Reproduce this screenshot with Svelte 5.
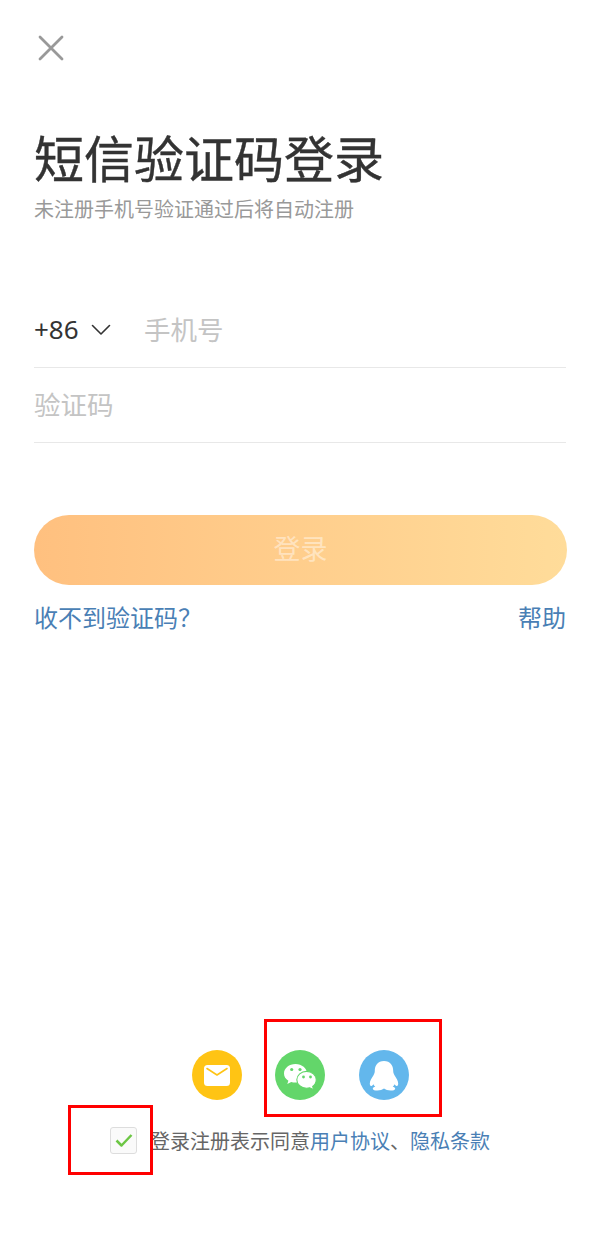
<script>
  const subtitle = '未注册手机号验证通过后将自动注册';
</script>

<div class="page">
  <button class="close" aria-label="关闭">
    <svg width="26" height="26" viewBox="0 0 26 26"><path d="M2 2 L24 24 M24 2 L2 24" stroke="#999" stroke-width="2.8" fill="none" stroke-linecap="round"/></svg>
  </button>

  <h1>短信验证码登录</h1>
  <p class="sub">{subtitle}</p>

  <div class="form">
    <div class="row">
      <span class="code">+86</span>
      <svg class="chev" width="20" height="12" viewBox="0 0 20 12"><path d="M1.5 1.5 L10 10 L18.5 1.5" stroke="#333" stroke-width="1.6" fill="none" stroke-linecap="round" stroke-linejoin="round"/></svg>
      <span class="ph">手机号</span>
    </div>
    <div class="row">
      <span class="ph first">验证码</span>
    </div>
  </div>

  <button class="login">登录</button>

  <div class="links">
    <span>收不到验证码？</span>
    <span>帮助</span>
  </div>

  <div class="spacer"></div>

  <div class="socials">
    <span class="badge mail">
      <svg width="26" height="21" viewBox="0 0 26 21"><rect width="26" height="21" rx="3.5" fill="#fff"/><path d="M3 3.500 L13 10 L23 3.500" stroke="#ffc414" stroke-width="1.6" fill="none" stroke-linecap="round" stroke-linejoin="round"/></svg>
    </span>
    <span class="badge wechat">
      <svg width="50" height="50" viewBox="0 0 50 50">
        <path d="M20.500 14C14.100 14 9 18.200 9 23.400c0 3 1.700 5.600 4.400 7.300L12.300 34l3.900-2c1.300.4 2.800.6 4.300.6 6.400 0 11.500-4.100 11.500-9.200S26.900 14 20.500 14z" fill="#fff"/>
        <path transform="translate(-2.500 -2.400) scale(1.080)" d="M40.500 29.800c0-4.300-4.100-7.800-9-7.800s-9 3.500-9 7.800 4.100 7.800 9 7.800c1 0 2-.1 3-.4l3.600 1.800-.9-3c2-1.400 3.300-3.700 3.300-6.200z" fill="#fff" stroke="#63d66a" stroke-width="1"/>
        <circle cx="16.700" cy="19.500" r="1.600" fill="#63d66a"/><circle cx="25" cy="19.500" r="1.600" fill="#63d66a"/>
        <circle cx="28.500" cy="27" r="1.400" fill="#63d66a"/><circle cx="35.500" cy="27" r="1.400" fill="#63d66a"/>
      </svg>
    </span>
    <span class="badge qq">
      <svg width="50" height="50" viewBox="0 0 50 50">
        <path d="M25 11C18.700 11 15.800 15.600 15.800 20.800c0 1.700-.4 3-1.300 4.400-1.900 2.900-3.700 5.600-3.700 8.300 0 1.500.5 2.500 1.200 2.500.8 0 1.800-.8 2.500-1.800.4 1 1 1.900 1.800 2.600-1.500.4-2.500 1.100-2.500 1.900 0 1.300 2.100 1.800 4.600 1.800 2.600 0 5-.7 6.600-2 1.600 1.300 4 2 6.600 2 2.500 0 4.600-.5 4.600-1.800 0-.8-1-1.500-2.500-1.900.8-.7 1.400-1.600 1.800-2.600.7 1 1.700 1.800 2.500 1.800.7 0 1.200-1 1.200-2.500 0-2.700-1.800-5.400-3.700-8.300-.9-1.400-1.300-2.700-1.300-4.400C34.200 15.600 31.300 11 25 11z" fill="#fff"/>
      </svg>
    </span>
  </div>

  <div class="agree">
    <span class="check">
      <svg width="18" height="15" viewBox="0 0 18 15"><path d="M1.500 7.500 L6.500 12.500 L16.500 2" stroke="#6cc644" stroke-width="2.500" fill="none" stroke-linejoin="round"/></svg>
    </span>
    <span class="agree-text">登录注册表示同意<a>用户协议</a>、<a>隐私条款</a></span>
  </div>

  <div class="mark mark-a"></div>
  <div class="mark mark-b"></div>
</div>

<style>
  :global(body) { margin: 0; background: #fff; }
  .page {
    position: relative;
    width: 600px;
    height: 1242px;
    box-sizing: border-box;
    padding: 0 34px;
    display: flex;
    flex-direction: column;
    overflow: hidden;
    font-family: "Noto Sans CJK SC", "Noto Sans", sans-serif;
  }
  .close {
    align-self: flex-start;
    margin: 35px 0 0 4px;
    padding: 0;
    border: 0;
    background: none;
    width: 26px;
    height: 26px;
    line-height: 0;
  }
  h1 {
    margin: 59px 0 0;
    font-size: 50px;
    font-weight: 400;
    -webkit-text-stroke: 0.4px #333;
    line-height: 72px;
    color: #333;
    white-space: nowrap;
  }
  .sub {
    margin: 2px 0 0;
    font-size: 20px;
    line-height: 30px;
    color: #999;
  }
  .form { margin-top: 69px; }
  .row {
    height: 74px;
    display: flex;
    align-items: center;
    border-bottom: 1px solid #e8e8e8;
  }
  .code { font-family: "Noto Sans", sans-serif; font-size: 26px; color: #333; width: 57px; margin-bottom: 2px; }
  .chev { width: 20px; }
  .ph { font-size: 26.5px; color: #c4c4c4; margin-left: 33px; margin-bottom: 4px; }
  .ph.first { margin-left: 0; }
  .login {
    margin-top: 72px;
    height: 70px;
    border: 0;
    border-radius: 35px;
    width: 533px;
    background: linear-gradient(90deg, #ffc07f, #ffdc9a);
    color: rgba(255, 255, 255, 0.45);
    font: inherit;
    font-size: 27px;
    padding: 0 0 5px;
  }
  .links {
    margin-top: 13px;
    display: flex;
    justify-content: space-between;
    font-size: 24px;
    line-height: 38px;
    color: #4a7fb5;
  }
  .spacer { flex: 1; }
  .socials {
    display: flex;
    justify-content: center;
    gap: 33px;
    padding-left: 1px;
  }
  .badge {
    width: 50px;
    height: 50px;
    border-radius: 50%;
    display: flex;
    align-items: center;
    justify-content: center;
  }
  .mail { background: #ffc414; }
  .wechat { background: #63d66a; }
  .qq { background: #63b7ec; margin-left: 1px; }
  .agree {
    margin: 24px 0 86px 76px;
    display: flex;
    align-items: center;
    gap: 14px;
    height: 32px;
  }
  .check {
    box-sizing: border-box;
    width: 27px;
    height: 27px;
    border: 1px solid #ddd;
    border-radius: 3px;
    background: #fafafa;
    display: flex;
    align-items: center;
    justify-content: center;
  }
  .agree-text { font-size: 20px; color: #666; white-space: nowrap; margin-left: -1px; }
  .agree-text a { color: #4a7fb5; }
  .mark {
    position: absolute;
    box-sizing: border-box;
    border: 3px solid #f00;
  }
  .mark-a { left: 264px; top: 1019px; width: 178px; height: 98px; }
  .mark-b { left: 68px; top: 1105px; width: 85px; height: 70px; }
</style>
